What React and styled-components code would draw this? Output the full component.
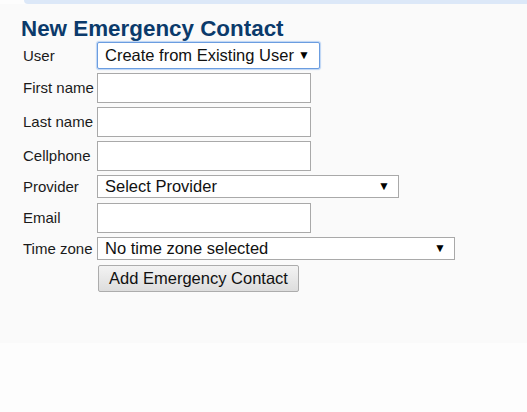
import React from "react";
import styled, { createGlobalStyle } from "styled-components";

const Global = createGlobalStyle`
  body {
    margin: 0;
    background: #fdfdfd;
    font-family: "Liberation Sans", Arial, sans-serif;
    color: #1a1a1a;
  }
`;

const TopBar = styled.div`
  height: 4px;
  margin-left: 24px;
  background: #dce8f8;
  border-bottom-left-radius: 10px;
`;

const Panel = styled.div`
  background: #fafafa;
  height: 339px;
  padding: 12px 0 0 21px;
  box-sizing: border-box;
`;

const Title = styled.h2`
  margin: 0;
  font-size: 22.4px;
  line-height: 1.15;
  font-weight: bold;
  color: #0b3a6b;
`;

const Form = styled.div`
  display: grid;
  grid-template-columns: 74px auto;
  row-gap: 4px;
  align-items: center;
  justify-items: start;
  padding-left: 2px;
`;

const Label = styled.label`
  font-size: 15px;
  color: #1a1a1a;
`;

const Input = styled.input`
  width: 214px;
  height: 30px;
  box-sizing: border-box;
  border: 1px solid #a9a9a9;
  background: #fff;
  margin: 0;
  font-size: 16px;
  font-family: inherit;
`;

const SelectWrap = styled.div`
  position: relative;
  width: ${(p) => p.$w}px;
  height: ${(p) => p.$h}px;
  margin-bottom: ${(p) => (p.$focus ? 0 : 1)}px;
`;

const Select = styled.select`
  appearance: none;
  width: 100%;
  height: 100%;
  box-sizing: border-box;
  margin: 0;
  padding: 0 0 0 7px;
  font-size: 16.5px;
  font-family: "Liberation Sans", Arial, sans-serif;
  color: #111;
  background: #fff;
  border: 1px solid ${(p) => (p.$focus ? "#6b9de0" : "#a9a9a9")};
  box-shadow: ${(p) => (p.$focus ? "0 0 1px 1px #bcd4f4" : "none")};
  outline: none;
  border-radius: ${(p) => (p.$focus ? "2px" : "0")};
`;

const Arrow = styled.span`
  position: absolute;
  right: ${(p) => p.$r}px;
  top: 50%;
  transform: translateY(-50%);
  font-size: 12px;
  color: #000;
  pointer-events: none;
`;

const Button = styled.button`
  margin-left: 1px;
  width: 201px;
  height: 27px;
  font-size: 16.5px;
  font-family: "Liberation Sans", Arial, sans-serif;
  color: #111;
  border: 1px solid #acacac;
  border-radius: 2px;
  background: linear-gradient(#f3f3f3, #dddddd);
  padding: 0;
`;

function Dropdown({ w, h, r, focus, text }) {
  return (
    <SelectWrap $w={w} $h={h} $focus={focus}>
      <Select $focus={focus}>
        <option>{text}</option>
      </Select>
      <Arrow $r={r}>▼</Arrow>
    </SelectWrap>
  );
}

export default function App() {
  return (
    <>
      <Global />
      <TopBar />
      <Panel>
        <Title>New Emergency Contact</Title>
        <Form>
          <Label>User</Label>
          <Dropdown w={223} h={27} r={10} focus text="Create from Existing User" />
          <Label>First name</Label>
          <Input />
          <Label>Last name</Label>
          <Input />
          <Label>Cellphone</Label>
          <Input />
          <Label>Provider</Label>
          <Dropdown w={302} h={23} r={9} text="Select Provider" />
          <Label>Email</Label>
          <Input />
          <Label>Time zone</Label>
          <Dropdown w={358} h={23} r={9} text="No time zone selected" />
          <span />
          <Button>Add Emergency Contact</Button>
        </Form>
      </Panel>
    </>
  );
}
